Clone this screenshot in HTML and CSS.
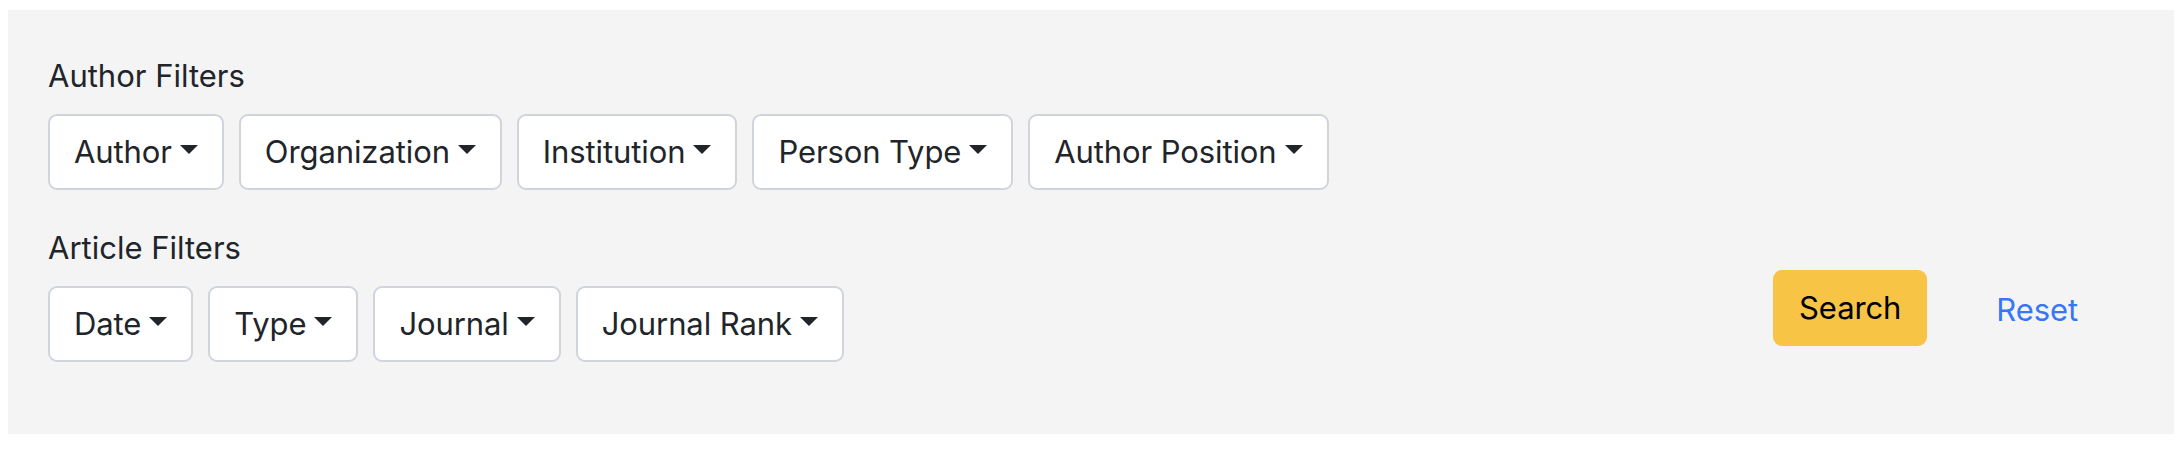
FILE: index.html
```html
<!DOCTYPE html>
<html lang="en">
<head>
<meta charset="utf-8">
<title>Filters</title>
<link rel="stylesheet" href="styles.css">
</head>
<body>
<div class="panel">
  <div class="filters">
    <div class="group">
      <div class="group-label">Author Filters</div>
      <div class="btn-row">
        <button class="btn dropdown">Author<span class="caret"></span></button>
        <button class="btn dropdown">Organization<span class="caret"></span></button>
        <button class="btn dropdown">Institution<span class="caret"></span></button>
        <button class="btn dropdown">Person Type<span class="caret"></span></button>
        <button class="btn dropdown">Author Position<span class="caret"></span></button>
      </div>
    </div>
    <div class="group">
      <div class="group-label">Article Filters</div>
      <div class="btn-row">
        <button class="btn dropdown">Date<span class="caret"></span></button>
        <button class="btn dropdown">Type<span class="caret"></span></button>
        <button class="btn dropdown">Journal<span class="caret"></span></button>
        <button class="btn dropdown">Journal Rank<span class="caret"></span></button>
      </div>
    </div>
  </div>
  <div class="actions">
    <button class="btn btn-search">Search</button>
    <button class="btn btn-reset">Reset</button>
  </div>
</div>
</body>
</html>
```

FILE: styles.css
```css
html, body {
  margin: 0;
  padding: 0;
  background: #ffffff;
}

body {
  font-family: "Inter", "Liberation Sans", sans-serif;
  color: #212529;
}

.panel {
  margin: 10px 6px 16px 8px;
  height: 424px;
  box-sizing: border-box;
  padding: 40px 40px 40px 40px;
  background: #f4f4f4;
  display: flex;
}

.filters {
  flex: 1;
  display: flex;
  flex-direction: column;
}

.group {
  margin-bottom: 32px;
}

.group-label {
  font-size: 31px;
  line-height: 48px;
  padding-top: 2px;
  margin-bottom: 14px;
}

.btn-row {
  display: flex;
  gap: 15px;
}

.btn {
  font-family: inherit;
  font-size: 31px;
  line-height: 48px;
  letter-spacing: -0.1px;
  padding: 12px 24px;
  border: 2px solid #d0d5db;
  border-radius: 9px;
  background: #ffffff;
  color: #212529;
  display: inline-flex;
  align-items: center;
  cursor: pointer;
}

.caret {
  display: inline-block;
  width: 0;
  height: 0;
  margin-left: 8px;
  border-top: 9px solid #212529;
  border-left: 9.5px solid transparent;
  border-right: 9.5px solid transparent;
  position: relative;
  top: -3px;
}

.actions {
  align-self: flex-end;
  margin-bottom: 48px;
  margin-right: 30px;
  display: flex;
  align-items: center;
}

.btn-search {
  background: #f7c446;
  border-color: #f7c446;
  color: #000000;
}

.btn-reset {
  background: transparent;
  border-color: transparent;
  color: #3478f6;
  margin-left: 43px;
  padding-top: 14px;
  padding-bottom: 10px;
}
```
